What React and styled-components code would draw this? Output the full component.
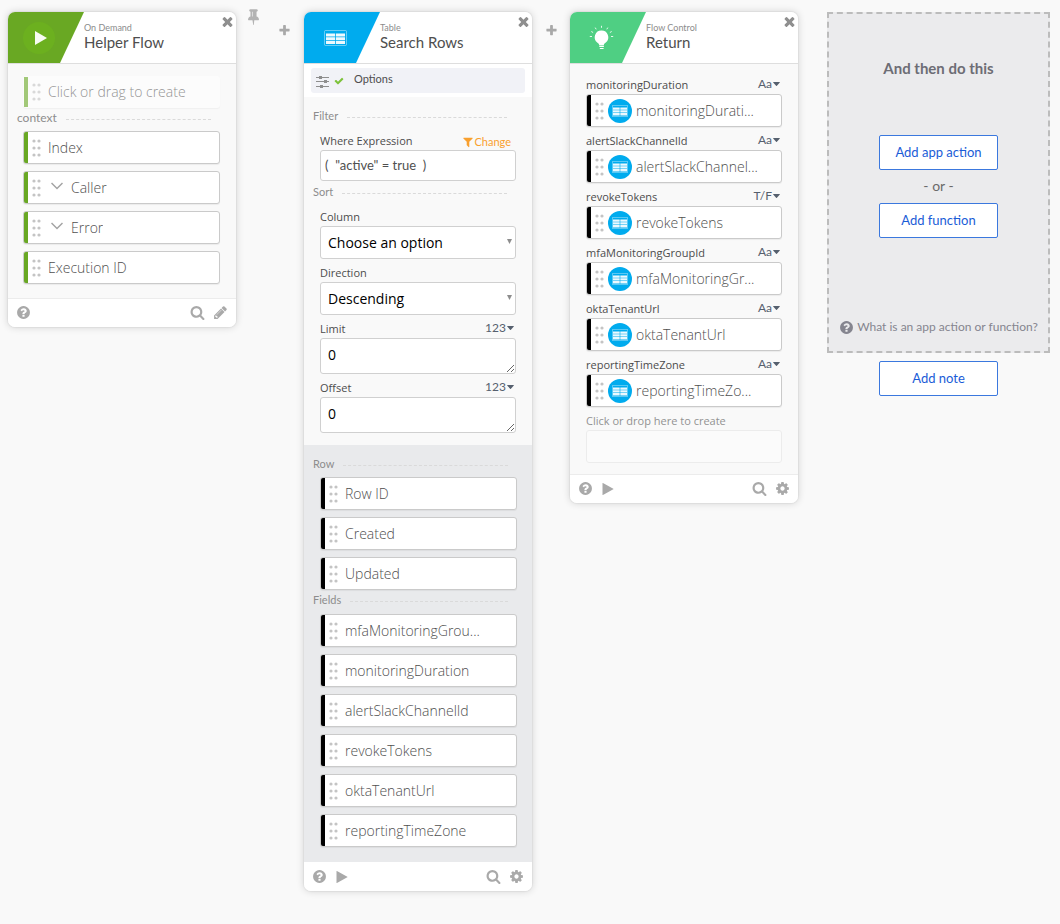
import React from "react";
import styled, { createGlobalStyle } from "styled-components";

const GlobalStyle = createGlobalStyle`
  *, *::before, *::after { box-sizing: border-box; }
  body {
    margin: 0;
    background: #f9f9f9;
    color: #5e5e5e;
    font-family: Lato, "Liberation Sans", sans-serif;
  }
  button, input, select, textarea { font-family: inherit; margin: 0; }
`;

const openSans = `"Open Sans", "Noto Sans", sans-serif`;

const paths = {
  close: "M1490 1322q0 40-28 68l-136 136q-28 28-68 28t-68-28l-294-294-294 294q-28 28-68 28t-68-28l-136-136q-28-28-28-68t28-68l294-294-294-294q-28-28-28-68t28-68l136-136q28-28 68-28t68 28l294 294 294-294q28-28 68-28t68 28l136 136q28 28 28 68t-28 68l-294 294 294 294q28 28 28 68z",
  plus: "M1600 736v192q0 40-28 68t-68 28h-416v416q0 40-28 68t-68 28h-192q-40 0-68-28t-28-68v-416h-416q-40 0-68-28t-28-68v-192q0-40 28-68t68-28h416v-416q0-40 28-68t68-28h192q40 0 68 28t28 68v416h416q40 0 68 28t28 68z",
  pin: "M800 864v-448q0-14-9-23t-23-9-23 9-9 23v448q0 14 9 23t23 9 23-9 9-23zm672 352q0 26-19 45t-45 19h-429l-51 483q-2 12-10.5 20.5t-20.5 8.5h-1q-27 0-32-27l-76-485h-404q-26 0-45-19t-19-45q0-123 78.5-221.5t177.5-98.5v-512q-52 0-90-38t-38-90 38-90 90-38h640q52 0 90 38t38 90-38 90-90 38v512q99 0 177.5 98.5t78.5 221.5z",
  search: "M1216 832q0-185-131.5-316.5t-316.5-131.5-316.5 131.5-131.5 316.5 131.5 316.5 316.5 131.5 316.5-131.5 131.5-316.5zm512 832q0 52-38 90t-90 38q-54 0-90-38l-343-342q-179 124-399 124-143 0-273.5-55.5t-225-150-150-225-55.5-273.5 55.5-273.5 150-225 225-150 273.5-55.5 273.5 55.5 225 150 150 225 55.5 273.5q0 220-124 399l343 343q37 37 37 90z",
  help: "M1024 1376v-192q0-14-9-23t-23-9h-192q-14 0-23 9t-9 23v192q0 14 9 23t23 9h192q14 0 23-9t9-23zm256-672q0-88-55.5-163t-138.5-116-170-41q-243 0-371 213-15 24 8 42l132 100q7 6 19 6 16 0 25-12 53-68 86-92 34-24 86-24 48 0 85.5 26t37.5 59q0 38-20 61t-68 45q-63 28-115.5 86.5t-52.5 125.5v36q0 14 9 23t23 9h192q14 0 23-9t9-23q0-19 21.5-49.5t54.5-49.5q32-18 49-28.5t46-35 44.5-48 28-60.5 12.5-81zm384 192q0 209-103 385.5t-279.5 279.5-385.5 103-385.5-103-279.5-279.5-103-385.5 103-385.5 279.5-279.5 385.5-103 385.5 103 279.5 279.5 103 385.5z",
  pencil: "M491 1536l91-91-235-235-91 91v107h128v128h107zm523-928q0-22-22-22-10 0-17 7l-542 542q-7 7-7 17 0 22 22 22 10 0 17-7l542-542q7-7 7-17zm-54-192l416 416-832 832h-416v-416zm683 96q0 53-37 90l-166 166-416-416 166-165q36-38 90-38 53 0 91 38l235 234q37 39 37 91z",
  cog: "M1152 896q0-106-75-181t-181-75-181 75-75 181 75 181 181 75 181-75 75-181zm512-109v222q0 12-8 23t-20 13l-185 28q-19 54-39 91 35 50 107 138 10 12 10 25t-9 23q-27 37-99 108t-94 71q-12 0-26-9l-138-108q-44 23-91 38-16 136-29 186-7 28-36 28h-222q-14 0-24.5-8.5t-11.5-21.5l-28-184q-49-16-90-37l-141 107q-10 9-25 9-14 0-25-11-126-114-165-168-7-10-7-23 0-12 8-23 15-21 51-66.5t54-70.5q-27-50-41-99l-183-27q-13-2-21-12.5t-8-23.5v-222q0-12 8-23t19-13l186-28q14-46 39-92-40-57-107-138-10-12-10-24 0-10 9-23 26-36 98.5-107.5t94.5-71.5q13 0 26 10l138 107q44-23 91-38 16-136 29-186 7-28 36-28h222q14 0 24.5 8.5t11.5 21.5l28 184q49 16 90 37l142-107q9-9 24-9 13 0 25 10 129 119 165 170 7 8 7 22 0 12-8 23-15 21-51 66.5t-54 70.5q26 50 41 98l183 28q13 2 21 12.5t8 23.5z",
  play: "M1576 927l-1328 738q-23 13-39.5 3t-16.5-36v-1472q0-26 16.5-36t39.5 3l1328 738q23 13 23 31t-23 31z",
  filter: "M1595 295q17 41-14 70l-493 493v742q0 42-39 59-13 5-25 5-27 0-45-19l-256-256q-19-19-19-45v-486l-493-493q-31-29-14-70 17-39 59-39h1280q42 0 59 39z",
  check: "M1671 566q0 40-28 68l-724 724-136 136q-28 28-68 28t-68-28l-136-136-362-362q-28-28-28-68t28-68l136-136q28-28 68-28t68 28l294 295 656-657q28-28 68-28t68 28l136 136q28 28 28 68z",
};

const Glyph = styled.svg`
  display: block;
  flex: none;
  fill: currentColor;
`;

const Icon = ({ name, size, color }) => (
  <Glyph width={size} height={size} viewBox="0 0 1792 1792" color={color} aria-hidden="true">
    <path d={paths[name]} />
  </Glyph>
);

const Board = styled.main`
  display: grid;
  grid-template-columns: minmax(0, 228fr) 68px minmax(0, 228fr) 38px minmax(0, 228fr) 29px minmax(0, 223fr);
  align-items: start;
  padding: 12px 10px 32px 8px;
`;

const Card = styled.section`
  overflow: hidden;
  border-radius: 7px;
  background: #f9f9f9;
  box-shadow: 0 0 1px 1px rgba(0, 0, 0, 0.04), 0 0 7px 1px rgba(0, 0, 0, 0.13);
`;

const CardHeader = styled.header`
  display: flex;
  height: 52px;
  background: #fff;
  border-bottom: 1px solid #dedede;
`;

const Banner = styled.div`
  display: flex;
  align-items: center;
  flex: none;
  width: 76px;
  padding-left: 14px;
  background: ${(p) => p.$color};
  clip-path: polygon(0 0, 100% 0, 52px 100%, 0 100%);
`;

const Titles = styled.div`
  flex: 1;
  min-width: 0;
  padding-top: 10px;
`;

const Kind = styled.div`
  font-size: 9px;
  line-height: 12px;
  color: #8c8c8c;
`;

const Title = styled.h2`
  margin: 0;
  font-size: 15px;
  line-height: 16px;
  font-weight: 400;
  color: #4e4e4e;
`;

const IconButton = styled.button`
  display: flex;
  align-items: center;
  justify-content: center;
  flex: none;
  padding: 0;
  border: 0;
  background: none;
  color: ${(p) => p.$color || "#a9a9a9"};
  cursor: pointer;
`;

const CloseButton = styled(IconButton)`
  align-self: flex-start;
  padding: 2px 1px 0 0;
`;

const CardBody = styled.div`
  padding: ${(p) => p.$pad};
`;

const Outputs = styled.div`
  padding: 9px 15px 15px 16px;
  background: #e9eaec;
`;

const CardFooter = styled.footer`
  display: flex;
  align-items: center;
  gap: 8px;
  height: 29px;
  padding: 0 8px 1px;
  background: #fff;
  border-top: 1px solid ${(p) => p.$line || "#ececec"};
`;

const Spacer = styled.span`
  flex: 1;
`;

const Divider = styled.h3`
  display: flex;
  align-items: center;
  gap: 9px;
  height: ${(p) => p.$height}px;
  margin: 0 9px 0 ${(p) => p.$outdent || -7}px;
  padding-bottom: ${(p) => (p.$raised ? 4 : 0)}px;
  font-size: ${(p) => p.$size || 11}px;
  line-height: 14px;
  font-weight: 400;
  color: #8d8d8d;

  &::after {
    content: "";
    flex: 1;
    margin-top: 3px;
    border-top: 1px dashed #dadada;
  }
`;

const PillList = styled.ul`
  display: flex;
  flex-direction: column;
  gap: 7px;
  margin: 0;
  padding: 0;
  list-style: none;
`;

const Pill = styled.li`
  display: flex;
  align-items: center;
  height: 33px;
  padding-left: 8px;
  overflow: hidden;
  border: 1px solid #cacaca;
  border-radius: 3px;
  background: #fff linear-gradient(${(p) => p.$color}, ${(p) => p.$color}) 0 0 / 4px 100% no-repeat;
  box-shadow: 0 1px 1px rgba(0, 0, 0, 0.06);
  font: 300 14px/18px ${openSans};
  color: #4f4f4f;
  white-space: nowrap;
  cursor: grab;
`;

const GhostPill = styled(Pill)`
  width: 100%;
  height: 32px;
  border-color: transparent;
  opacity: 0.6;
`;

const PillText = styled.span`
  margin-left: ${(p) => p.$gap || 7}px;
  overflow: hidden;
  text-overflow: ellipsis;
`;

const BadgeSlot = styled.span`
  flex: none;
  margin-left: 4px;
`;

const Field = styled.div`
  display: flex;
  flex-direction: column;
`;

const FieldHead = styled.div`
  display: flex;
  align-items: center;
  justify-content: space-between;
  height: 23px;
  padding-top: 4px;
`;

const Label = styled.label`
  font: 400 11px/16px ${openSans};
  color: ${(p) => (p.$muted ? "#929292" : "#4c4c4c")};
`;

const TypeButton = styled.button`
  display: flex;
  align-items: center;
  gap: 1px;
  padding: 0 2px 2px 0;
  border: 0;
  background: none;
  font-size: 12px;
  line-height: 14px;
  color: #56606e;
  cursor: pointer;
`;

const ChangeLink = styled.a`
  display: flex;
  align-items: center;
  padding: 2px 5px 0 0;
  font-size: 11px;
  line-height: 14px;
  color: #f9a02e;
  text-decoration: none;
`;

const TextInput = styled.input`
  width: 100%;
  height: ${(p) => p.$height || 31}px;
  padding: 0 4px 2px;
  border: 1px solid #d0d0d0;
  border-radius: 3px;
  background: #fff;
  font-size: 13px;
  color: #505050;
`;

const DropInput = styled(TextInput)`
  border-color: #ececec;
  background: #fbfbfb;
`;

const SelectWrap = styled.div`
  position: relative;
`;

const Select = styled.select`
  appearance: none;
  display: block;
  width: 100%;
  height: 33px;
  padding: 0 16px 0 7px;
  border: 1px solid #d0d0d0;
  border-radius: 3px;
  background: #fff;
  font: 400 14px/18px ${openSans};
  color: #000;
`;

const SelectArrow = styled(Glyph)`
  position: absolute;
  top: 13px;
  right: 3px;
  color: #8d8d8d;
  pointer-events: none;
`;

const TextArea = styled.textarea`
  display: block;
  width: 100%;
  height: 36px;
  padding: 7px;
  border: 1px solid #d0d0d0;
  border-radius: 3px;
  background: #fff;
  font: 400 14px/18px ${openSans};
  color: #000;
  resize: vertical;
  overflow: hidden;
`;

const OptionsBar = styled.div`
  padding: 4px 7px;
  background: #fff;
`;

const OptionsButton = styled.button`
  display: flex;
  align-items: center;
  gap: 4px;
  width: 100%;
  height: 25px;
  padding: 0 5px;
  border: 0;
  border-radius: 3px;
  background: #f1f2f7;
  cursor: pointer;
`;

const OptionsText = styled.span`
  padding: 0 0 3px 6px;
  font-size: 11px;
  line-height: 14px;
  color: #4e4e4e;
`;

const Connector = styled.div`
  display: flex;
  justify-content: ${(p) => (p.$withPin ? "space-between" : "center")};
  align-items: center;
  height: 36px;
  padding: ${(p) => (p.$withPin ? "0 13px 0 9px" : "0")};
`;

const PinButton = styled(IconButton)`
  align-self: flex-start;
  margin-top: -4px;
`;

const NextColumn = styled.div`
  display: flex;
  flex-direction: column;
  align-items: center;
  gap: 8px;
`;

const NextPanel = styled.section`
  display: flex;
  flex-direction: column;
  align-items: center;
  width: 100%;
  padding: 45px 8px 16px;
  border: 2px dashed #bcbcbc;
  background: #ebebed;
`;

const NextTitle = styled.h2`
  margin: 0 0 58px;
  font-size: 15px;
  line-height: 18px;
  font-weight: 700;
  color: #6d6d75;
`;

const OutlineButton = styled.button`
  width: 119px;
  height: 35px;
  padding: 0 0 2px;
  border: 1px solid #3b78de;
  border-radius: 2px;
  background: #fff;
  font-size: 13px;
  line-height: 18px;
  color: #1a5cd7;
  cursor: pointer;
`;

const Or = styled.div`
  padding: 7px 0 9px;
  font-size: 14px;
  line-height: 17px;
  color: #6a6a6a;
`;

const HelpLink = styled.a`
  display: flex;
  align-items: center;
  gap: 3px;
  margin-top: 81px;
  font-size: 12px;
  line-height: 16px;
  color: #85858f;
  text-decoration: none;
  white-space: nowrap;
`;

const Grip = () => (
  <Glyph width="9" height="18" viewBox="0 0 9 18" color="#c4c4c4" aria-hidden="true">
    {[2, 9, 16].map((y) => (
      <g key={y}>
        <circle cx="2" cy={y} r="1.6" />
        <circle cx="7" cy={y} r="1.6" />
      </g>
    ))}
  </Glyph>
);

const Caret = () => (
  <Glyph width="7" height="4" viewBox="0 0 7 4" aria-hidden="true">
    <path d="M0.4 0h6.2q0.6 0.3 0 0.8L3.9 3.7q-0.4 0.4-0.8 0L0.4 0.8Q-0.2 0.3 0.4 0z" />
  </Glyph>
);

const Chevron = styled.svg`
  flex: none;
  margin: -3px 1px 0 10px;
`;

const TableLogo = () => (
  <Glyph width="36" height="36" viewBox="0 0 36 36" aria-hidden="true">
    <rect x="6.5" y="10.5" width="22" height="15" rx="1" fill="none" stroke="#fff" strokeOpacity="0.4" />
    <path
      fill="#fff"
      fillOpacity="0.93"
      d="M8 13.5h9.200v3H8zM18 13.5h9v3h-9zM8 17.200h9.200v2.900H8zM18 17.200h9v2.900h-9zM8 20.800h9.200v3.200H8zM18 20.800h9v3.200h-9z"
    />
  </Glyph>
);

const PlayLogo = () => (
  <Glyph width="36" height="36" viewBox="0 0 36 36" aria-hidden="true">
    <circle cx="17" cy="18" r="16" fill="#6cb01f" />
    <path fill="#f7fbf2" d="M13 11v14l12-7z" />
  </Glyph>
);

const BulbLogo = () => (
  <Glyph width="36" height="36" viewBox="-1 0 36 36" aria-hidden="true">
    <path fill="#fff" d="M16.500 10.500a6.700 6.700 0 0 0-4.300 11.900c1.400 1.100 1.900 1.500 2 2.800h4.600c.1-1.300.6-1.700 2-2.800A6.700 6.700 0 0 0 16.500 10.500z" />
    <path fill="none" stroke="#fff" strokeWidth="1.2" d="M14.300 26.300h4.600M14.800 28.500h3.800" />
    <path fill="none" stroke="#fff" strokeOpacity="0.85" d="M16.500 5.800v2M10.200 7.600l1 1.700M22.800 7.600l-1 1.700M6.300 11.500l1.800 1M26.700 11.500l-1.800 1M4.800 16.500h2.200M28.200 16.500H26" />
  </Glyph>
);

const TableBadge = () => (
  <Glyph width="24" height="24" viewBox="0 0 24 24" aria-hidden="true">
    <circle cx="12" cy="12" r="12" fill="#00abee" />
    <rect x="4.5" y="6.5" width="15" height="11" fill="none" stroke="#fff" strokeOpacity="0.35" />
    <path fill="#fff" fillOpacity="0.92" d="M5 8.500h6.700v2.300H5zM12.300 8.500H19v2.300h-6.700zM5 11.300h6.700v2.100H5zM12.300 11.300H19v2.100h-6.700zM5 13.900h6.700v2.500H5zM12.300 13.900H19v2.500h-6.700z" />
  </Glyph>
);

const Sliders = () => (
  <Glyph width="14" height="14" viewBox="0 0 14 14" color="#8e8e8e" aria-hidden="true">
    <path d="M0 3h13v1H0zM0 7h13v1H0zM0 12h13v1H0zM3 2h3v3H3zM8 6h3v3H8zM4 11h3v3H4z" />
  </Glyph>
);

const Header = ({ color, logo, kind, title }) => (
  <CardHeader>
    <Banner $color={color}>{logo}</Banner>
    <Titles>
      <Kind>{kind}</Kind>
      <Title>{title}</Title>
    </Titles>
    <CloseButton type="button" aria-label="Close" $color="#8f8f8f">
      <Icon name="close" size={15} />
    </CloseButton>
  </CardHeader>
);

const Footer = ({ runnable, tool, line }) => (
  <CardFooter $line={line}>
    <IconButton type="button" aria-label="Help"><Icon name="help" size={15} /></IconButton>
    {runnable && <IconButton type="button" aria-label="Run"><Icon name="play" size={14} /></IconButton>}
    <Spacer />
    <IconButton type="button" aria-label="Search"><Icon name="search" size={15} /></IconButton>
    <IconButton type="button" aria-label="Settings"><Icon name={tool} size={15} /></IconButton>
  </CardFooter>
);

const Item = ({ text, color, expandable }) => (
  <Pill $color={color}>
    <Grip />
    {expandable && (
      <Chevron width="12" height="8" viewBox="0 0 12 8" fill="none" stroke="#a4a4a4" strokeWidth="1.5" aria-hidden="true">
        <path d="M0.5 1l5.5 5.5L11.5 1" />
      </Chevron>
    )}
    <PillText>{text}</PillText>
  </Pill>
);

const TypePicker = ({ type }) => (
  <TypeButton type="button">{type}<Caret /></TypeButton>
);

const SelectField = ({ id, label, options }) => (
  <Field>
    <FieldHead><Label htmlFor={id}>{label}</Label></FieldHead>
    <SelectWrap>
      <Select id={id}>{options.map((o) => <option key={o}>{o}</option>)}</Select>
      <SelectArrow width="7" height="5" viewBox="0 0 7 5" aria-hidden="true">
        <path d="M1 0h5L3.5 5z" />
      </SelectArrow>
    </SelectWrap>
  </Field>
);

const NumberField = ({ id, label }) => (
  <Field>
    <FieldHead>
      <Label htmlFor={id}>{label}</Label>
      <TypePicker type="123" />
    </FieldHead>
    <TextArea id={id} defaultValue="0" />
  </Field>
);

const green = "#69a823";

const context = [
  { text: "Index" },
  { text: "Caller", expandable: true },
  { text: "Error", expandable: true },
  { text: "Execution ID" },
];

const rowOutputs = ["Row ID", "Created", "Updated"];
const fieldOutputs = [
  "mfaMonitoringGrou...",
  "monitoringDuration",
  "alertSlackChannelId",
  "revokeTokens",
  "oktaTenantUrl",
  "reportingTimeZone",
];

const returns = [
  { name: "monitoringDuration", type: "Aa", value: "monitoringDurati..." },
  { name: "alertSlackChannelId", type: "Aa", value: "alertSlackChannel..." },
  { name: "revokeTokens", type: "T/F", value: "revokeTokens" },
  { name: "mfaMonitoringGroupId", type: "Aa", value: "mfaMonitoringGr..." },
  { name: "oktaTenantUrl", type: "Aa", value: "oktaTenantUrl" },
  { name: "reportingTimeZone", type: "Aa", value: "reportingTimeZo..." },
];

export default function App() {
  return (
    <>
      <GlobalStyle />
      <Board>
        <Card>
          <Header color={green} logo={<PlayLogo />} kind="On Demand" title="Helper Flow" />
          <CardBody $pad="12px 16px 14px 15px">
            <GhostPill as="button" type="button" $color={green}>
              <Grip />
              <PillText>Click or drag to create</PillText>
            </GhostPill>
            <Divider $height={23} $size={12} $outdent={-6} $raised>context</Divider>
            <PillList>
              {context.map((c) => <Item key={c.text} color={green} {...c} />)}
            </PillList>
          </CardBody>
          <Footer tool="pencil" />
        </Card>

        <Connector $withPin>
          <PinButton type="button" aria-label="Pin" $color="#b3b3b3"><Icon name="pin" size={17} /></PinButton>
          <IconButton type="button" aria-label="Add step"><Icon name="plus" size={13} /></IconButton>
        </Connector>

        <Card>
          <Header color="#00abee" logo={<TableLogo />} kind="Table" title="Search Rows" />
          <OptionsBar>
            <OptionsButton type="button">
              <Sliders />
              <Icon name="check" size={10} color="#7cc23a" />
              <OptionsText>Options</OptionsText>
            </OptionsButton>
          </OptionsBar>
          <CardBody $pad="8px 16px 12px">
            <Divider $height={22}>Filter</Divider>
            <Field>
              <FieldHead>
                <Label htmlFor="where">Where Expression</Label>
                <ChangeLink href="#change"><Icon name="filter" size={12} />Change</ChangeLink>
              </FieldHead>
              <TextInput id="where" type="text" defaultValue={'(  "active" = true  )'} />
            </Field>
            <Divider $height={22}>Sort</Divider>
            <SelectField id="column" label="Column" options={["Choose an option"]} />
            <SelectField id="direction" label="Direction" options={["Descending", "Ascending"]} />
            <NumberField id="limit" label="Limit" />
            <NumberField id="offset" label="Offset" />
          </CardBody>
          <Outputs>
            <Divider $height={23} $raised>Row</Divider>
            <PillList>
              {rowOutputs.map((t) => <Item key={t} color="#000" text={t} />)}
            </PillList>
            <Divider $height={24} $raised>Fields</Divider>
            <PillList>
              {fieldOutputs.map((t) => <Item key={t} color="#000" text={t} />)}
            </PillList>
          </Outputs>
          <Footer runnable tool="cog" line="#fff" />
        </Card>

        <Connector>
          <IconButton type="button" aria-label="Add step"><Icon name="plus" size={13} /></IconButton>
        </Connector>

        <Card>
          <Header color="#4fcf83" logo={<BulbLogo />} kind="Flow Control" title="Return" />
          <CardBody $pad="7px 16px 11px">
            {returns.map((r) => (
              <Field key={r.name}>
                <FieldHead>
                  <Label as="span">{r.name}</Label>
                  <TypePicker type={r.type} />
                </FieldHead>
                <Pill as="div" $color="#000">
                  <Grip />
                  <BadgeSlot><TableBadge /></BadgeSlot>
                  <PillText $gap={4}>{r.value}</PillText>
                </Pill>
              </Field>
            ))}
            <Field>
              <FieldHead><Label $muted htmlFor="new-return">Click or drop here to create</Label></FieldHead>
              <DropInput id="new-return" type="text" $height={33} />
            </Field>
          </CardBody>
          <Footer runnable tool="cog" />
        </Card>

        <span />

        <NextColumn>
          <NextPanel>
            <NextTitle>And then do this</NextTitle>
            <OutlineButton type="button">Add app action</OutlineButton>
            <Or>- or -</Or>
            <OutlineButton type="button">Add function</OutlineButton>
            <HelpLink href="#help"><Icon name="help" size={15} />What is an app action or function?</HelpLink>
          </NextPanel>
          <OutlineButton type="button">Add note</OutlineButton>
        </NextColumn>
      </Board>
    </>
  );
}
